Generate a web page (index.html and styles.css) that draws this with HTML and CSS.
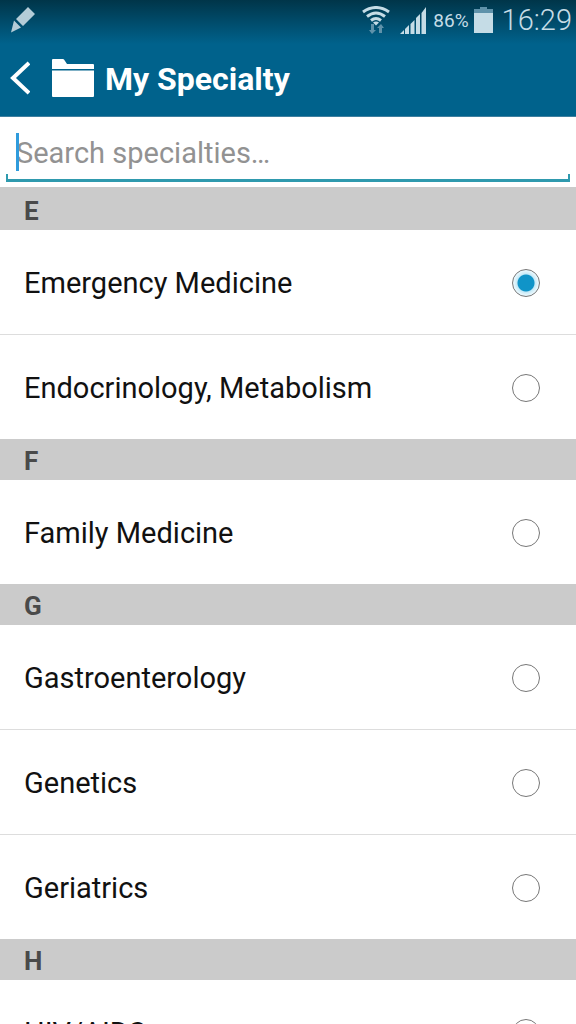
FILE: index.html
```html
<!DOCTYPE html>
<html lang="en">
<head>
<meta charset="utf-8">
<meta name="viewport" content="width=device-width, initial-scale=1">
<title>My Specialty</title>
<link rel="stylesheet" href="styles.css">
</head>
<body>
<div class="app">
  <header class="top">
    <div class="status">
      <svg class="pen" width="28" height="26" viewBox="0 0 28 26" aria-hidden="true"><path d="M20 0l7 7-12 12-7-7zM6 13.500l7 7-10 5z"/></svg>
      <svg class="wifi" width="28" height="28" viewBox="0 0 28 28" aria-hidden="true">
        <g class="waves"><path d="M1 6q13-9 26 0"/><path d="M5 10.500q9-7 18 0"/><path d="M9 14.500q5-4 10 0"/></g>
        <path d="M11 16.500q3-2 6 0l-3 3z"/>
        <path class="dim" d="M9 18h3v6h2l-4 4-3-4h2zM17 27v-5h-2l4-4 3 4h-2v5z"/>
      </svg>
      <svg class="signal" width="27" height="27" viewBox="0 0 27 27" aria-hidden="true"><path d="M0 27l4-4v4zM5 27v-5l4-4v9zM10.500 27V17l4-4v14zM16 27V11l4-4v20zM21.500 27V6L26 0v27z"/></svg>
      <span class="percent">86%</span>
      <svg class="battery" width="19" height="26" viewBox="0 0 19 26" aria-hidden="true"><path class="dim" d="M6 0h7v2h6v5H0V2h6z"/><path d="M0 6h19v20H0z"/></svg>
      <time class="clock">16:29</time>
    </div>
    <div class="bar">
      <button class="back" type="button" aria-label="Back"><svg width="22" height="34" viewBox="0 0 22 34" aria-hidden="true"><path d="M21 2L5 17l16 15"/></svg></button>
      <svg class="folder" width="42" height="38" viewBox="0 0 42 38" aria-hidden="true"><path d="M0 10V1q0-1 1-1h10q1 0 2 2l2 3h26q1 0 1 1v4zM0 11.500h42V37q0 1-1 1H1q-1 0-1-1z"/></svg>
      <h1 class="title">My Specialty</h1>
    </div>
  </header>
  <div class="search">
    <div class="field">
      <input class="query" type="text" placeholder="Search specialties…" aria-label="Search specialties">
      <span class="caret"></span>
    </div>
  </div>
  <main class="list">
    <h2 class="letter">E</h2>
    <div class="group">
      <label class="row">Emergency Medicine<input class="radio" type="radio" name="specialty" checked></label>
      <label class="row">Endocrinology, Metabolism<input class="radio" type="radio" name="specialty"></label>
    </div>
    <h2 class="letter">F</h2>
    <div class="group">
      <label class="row">Family Medicine<input class="radio" type="radio" name="specialty"></label>
    </div>
    <h2 class="letter">G</h2>
    <div class="group">
      <label class="row">Gastroenterology<input class="radio" type="radio" name="specialty"></label>
      <label class="row">Genetics<input class="radio" type="radio" name="specialty"></label>
      <label class="row">Geriatrics<input class="radio" type="radio" name="specialty"></label>
    </div>
    <h2 class="letter">H</h2>
    <div class="group">
      <label class="row">HIV/AIDS<input class="radio" type="radio" name="specialty"></label>
    </div>
  </main>
</div>
</body>
</html>
```

FILE: styles.css
```css
* {
  box-sizing: border-box;
}

body {
  margin: 0;
  font-family: Roboto, "Liberation Sans", sans-serif;
  background: #fff;
  color: #111;
}

.app {
  display: flex;
  flex-direction: column;
  height: 100vh;
  overflow: hidden;
}

.top {
  flex: none;
  border-bottom: 1px solid #3f7f9f;
  background: linear-gradient(#003549, #00628c 44px);
  color: #fff;
}

.status {
  display: flex;
  align-items: center;
  height: 40px;
  padding: 0 4px 0 8px;
  color: #c5dce6;
  fill: #c5dce6;
}

.pen {
  margin-right: auto;
  fill: #b4ccd7;
}

.wifi {
  margin-right: 10px;
}

.waves {
  fill: none;
  stroke: #c5dce6;
  stroke-width: 3;
}

.dim {
  fill: #5f92aa;
}

.signal {
  margin-right: 6px;
}

.percent {
  margin-right: 5px;
  font-size: 19px;
}

.battery {
  margin-right: 9px;
}

.clock {
  font-size: 29px;
  font-weight: 300;
}

.bar {
  display: flex;
  align-items: center;
  height: 76px;
  padding: 0 8px;
}

.back {
  display: flex;
  margin-right: 22px;
  padding: 0;
  border: 0;
  background: none;
}

.back path {
  fill: none;
  stroke: #fff;
  stroke-width: 4;
}

.folder {
  margin-right: 11px;
  fill: #fff;
}

.title {
  margin: 0;
  padding-top: 2px;
  font-size: 32px;
  font-weight: 700;
  line-height: 40px;
}

.search {
  flex: none;
  padding: 12px 6px 5px;
}

.field {
  position: relative;
  padding-top: 5px;
  padding-bottom: 8px;
  border-bottom: 3px solid #2f9aae;
}

.field::before,
.field::after {
  content: "";
  position: absolute;
  bottom: 0;
  width: 2px;
  height: 5px;
  background: #2f9aae;
}

.field::before {
  left: 0;
}

.field::after {
  right: 0;
}

.query {
  display: block;
  width: 100%;
  height: 37px;
  padding: 0 10px;
  border: 0;
  outline: 0;
  background: none;
  color: #111;
  font: 29px Roboto, "Liberation Sans", sans-serif;
}

.query::placeholder {
  color: #929292;
}

.caret {
  position: absolute;
  top: 4px;
  left: 10px;
  width: 3px;
  height: 38px;
  background: #2f9bdc;
}

.list {
  flex: 1;
  overflow-y: auto;
  scrollbar-width: none;
  border-top: 2px solid #cbcbcb;
}

.letter {
  margin: 0;
  padding: 3px 24px 0;
  background: #cbcbcb;
  color: #4a4a4a;
  font-size: 26px;
  font-weight: 700;
  line-height: 38px;
}

.row {
  display: flex;
  align-items: center;
  justify-content: space-between;
  min-height: 104px;
  padding: 2px 36px 0 24px;
  font-size: 29px;
}

.row + .row {
  border-top: 1px solid #ddd;
  min-height: 105px;
}

.radio {
  appearance: none;
  width: 28px;
  height: 28px;
  margin: 0;
  border: 1px solid #777;
  border-radius: 50%;
  background: #fff;
}

.radio:checked {
  background: radial-gradient(circle, #1094c8 8px, #c5e9f7 9px, #e6f6fc 12px);
}
```
